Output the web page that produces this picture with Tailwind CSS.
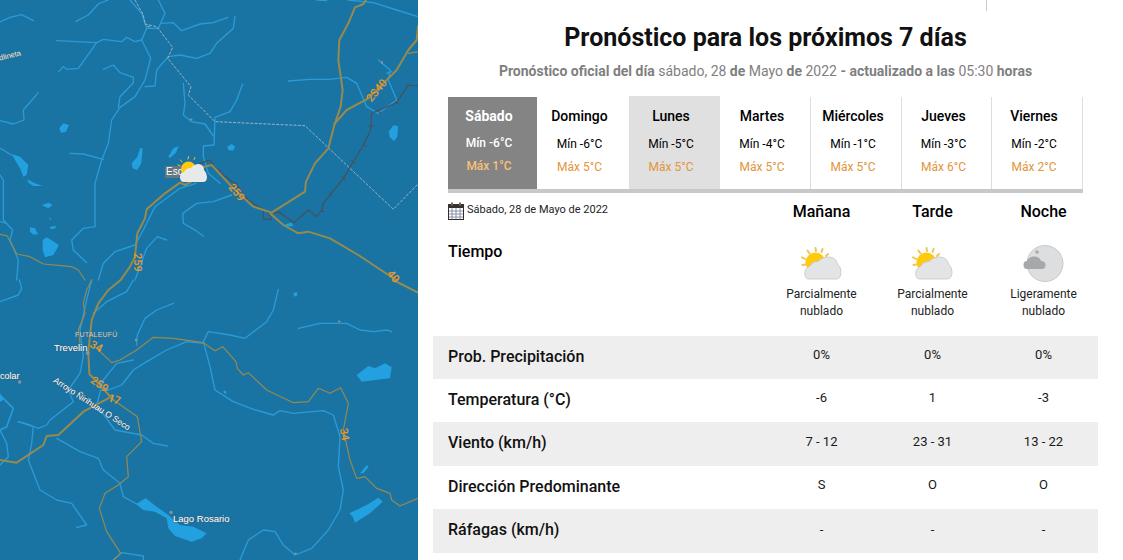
<!DOCTYPE html>
<html lang="es">
<head>
<meta charset="UTF-8">
<title>Pronóstico</title>
<script src="https://cdn.jsdelivr.net/npm/@tailwindcss/browser@4"></script>
</head>
<body class="bg-white font-['Roboto',sans-serif] text-black overflow-hidden">
<div class="flex w-[1123px] h-[560px] overflow-hidden">

  <!-- Map -->
  <div class="relative w-[418px] h-[560px] shrink-0 bg-[#1a74a3] overflow-hidden">
    <svg class="absolute inset-0" width="418" height="560" viewBox="0 0 1254 1680" fill="none" stroke-linejoin="round" stroke-linecap="round">
      <!-- rivers top -->
      <g stroke="#2a9bd9" stroke-width="4">
        <path d="M0 66 L30 52 L65 44 L100 62"/>
        <path d="M228 64 L265 45 L295 12 L325 0"/>
        <path d="M390 0 L425 40 L440 85 L475 85 L495 40 L475 0"/>
        <path d="M170 122 L290 128 L310 118 L365 125 L380 112 L405 125 L425 120 L440 85"/>
        <path d="M290 128 L235 205 L200 208 L190 200 L176 215"/>
        <path d="M425 120 L440 150 L452 175 L435 240 L405 290 L360 322 L335 360 L325 430 L305 480 L285 550 L285 680 L250 685 L215 720 L220 750 L260 788"/>
        <path d="M310 208 L340 195 L360 218 L400 232 L400 248 L360 290 L355 322"/>
        <path d="M485 70 L520 68 L545 92 L600 72 L640 68 L684 52"/>
        <path d="M705 50 L700 85 L650 130 L630 160 L590 175 L540 165 L505 170 L470 210 L465 258 L435 260"/>
        <path d="M550 250 L555 310 L550 345 L575 365 L615 372 L640 408"/>
        <path d="M728 252 L710 300 L690 335 L645 352 L642 435 L610 438 L610 470 L625 520 L660 550"/>
        <path d="M210 460 L250 462 L310 478"/>
        <path d="M115 278 L70 330 L72 360 L40 372 L0 362"/>
        <path d="M0 445 L35 465"/>
        <path d="M0 525 L10 540 L10 660 L38 690 L30 720 L55 780 L50 840"/>
        <path d="M0 665 L20 670"/>
        <path d="M695 585 L640 605 L590 610 L548 640 L550 670 L585 690 L610 708"/>
        <path d="M588 550 L540 565 L465 620 L430 690 L405 735 L345 755 L310 790 L295 840"/>
        <path d="M500 720 L472 710 L440 745 L405 840"/>
        <path d="M865 243 L930 238 L985 238 L1040 232 L1070 250 L1100 320 L1135 340 L1190 300 L1165 240 L1170 210 L1135 180"/>
        <path d="M950 0 L980 2 M1045 0 L1120 8 L1190 30 L1254 50"/>
        <path d="M1160 220 L1175 215"/>
      </g>
      <!-- rivers bottom -->
      <g transform="translate(0 840)" stroke="#2a9bd9" stroke-width="4">
        <path d="M0 65 L55 45 L65 25 L58 0"/>
        <path d="M275 0 L260 60 L240 150 L250 230 L240 280 L205 330 L220 365 L195 385 L150 420 L140 435 L115 445 L90 435 L55 425"/>
        <path d="M400 0 L380 35 L320 65 L280 100"/>
        <path d="M520 70 L470 90 L435 115 L412 165 L410 195"/>
        <path d="M835 28 L820 90 L800 125 L735 175 L690 165 L625 155 L610 185 L630 260 L645 330 L700 365 L760 388 L820 405 L840 392 L880 400 L970 392 L1000 405 L1020 470 L1015 560 L1030 630 L1020 690 L985 750 L935 805 L885 825 L850 795 L825 755 L790 750 L745 780 L720 840"/>
        <path d="M610 190 L560 185 L500 210 L440 245 L400 270 L365 315 L320 332"/>
        <path d="M400 240 L350 250 L310 300 L290 375 L345 450 L425 465 L460 490 L502 498"/>
        <path d="M895 145 L960 130 L1040 130 L1080 150 L1120 155 L1160 150 L1175 155"/>
        <path d="M55 425 L100 440 L95 490 L85 540 L120 630 L170 660 L215 670 L260 735 L230 742"/>
        <path d="M170 475 L240 515 L295 535 L310 570 L360 610 L370 650 L410 672"/>
        <path d="M0 450 L20 490 L25 530 L0 555"/>
        <path d="M0 345 L40 385 L20 440 L0 450" stroke-width="5"/>
        <path d="M340 840 L365 818 L430 828 L430 840"/>
      </g>
      <!-- lakes -->
      <g fill="#22a0e0" stroke="none">
        <path d="M178 385 L190 370 L207 375 L198 395 L183 398Z"/>
        <path d="M395 490 L412 470 L420 445 L428 445 L424 490 L412 510 L398 505Z"/>
        <path d="M505 470 L520 445 L536 438 L528 458 L510 474Z"/>
        <path d="M682 440 L695 432 L706 440 L698 452 L685 450Z"/>
        <path d="M1166 395 L1180 376 L1194 378 L1192 410 L1182 424 L1170 412Z"/>
        <path d="M35 462 L60 470 L85 495 L80 525 L70 530 L60 505 L45 480Z"/>
        <path d="M82 538 L105 550 L128 558 L100 558 L85 548Z"/>
        <path d="M125 616 L145 608 L158 615 L145 625Z"/>
        <path d="M90 682 L105 685 L114 703 L100 704 L90 695Z"/>
        <path d="M150 680 L168 678 L165 686 L150 686Z M147 652 L155 658 L150 660Z"/>
        <path d="M128 720 L140 712 L177 735 L160 765 L135 772 L128 750Z"/>
        <path d="M855 673 L875 668 L880 678 L860 680Z"/>
      </g>
      <g transform="translate(0 840)" fill="#22a0e0" stroke="none">
        <path d="M1070 285 L1105 258 L1125 265 L1155 250 L1175 262 L1170 295 L1125 300 L1085 305Z"/>
        <path d="M408 672 L437 655 L470 680 L505 705 L540 735 L580 740 L620 760 L605 775 L575 785 L525 768 L505 745 L500 715 L465 695 L430 690Z"/>
        <path d="M1048 700 L1100 675 L1135 653 L1148 665 L1110 700 L1065 728 L1058 710Z"/>
        <path d="M880 40 L890 35 L893 46 L882 50Z"/>
        <path d="M670 332 L678 332 L680 342 L672 340Z"/>
        <path d="M1080 580 L1100 556 L1106 560 L1090 580Z"/>
        <path d="M0 340 L10 360 L0 365Z"/>
      </g>
      <!-- borders -->
      <g stroke="#aebfc8" stroke-width="2.500" stroke-dasharray="9 4" stroke-linecap="butt">
        <path d="M405 0 L430 45 L435 72 L470 80 L518 142 L503 175 L573 260 L565 285 L645 365 L915 377 L1180 628 L1254 552"/>
      </g>
      <!-- rail -->
      <g stroke="#4a5058" stroke-width="3.500">
        <path d="M600 490 L630 480 L650 510 L710 555 L745 600 L790 630 L790 658 L815 658 L805 638 L840 638 L882 668 L925 630 L950 650 L965 632 L970 610 L1030 535 L1090 435 L1112 390 L1115 340 L1190 308 L1225 255 L1254 258"/>
        <path stroke-width="3" d="M655 508 L665 514 M705 545 L712 552 M738 595 L748 602 M835 632 L843 640 M960 634 L972 634 M988 580 L998 588 M1024 530 L1036 540 M1055 482 L1067 490 M1088 432 L1100 440 M1106 378 L1122 378 M1132 332 L1142 340 M1185 305 L1196 312 M1218 254 L1230 258"/>
      </g>
      <!-- roads top -->
      <g stroke="#978a4e" stroke-width="6">
        <path d="M1098 0 L1090 12 L1065 22 L1045 70 L1018 120 L1015 180 L1028 270 L1022 320 L1003 375 L985 445 L945 490 L918 545 L915 575 L815 638 L760 620 L700 565 L635 495 L612 500 L575 545 L555 555 L540 548 L495 580 L440 628 L435 655 L412 700 L405 770 L390 800 L362 840"/>
        <path d="M1003 372 L1040 330 L1105 295 L1190 210 L1225 150 L1250 120 L1254 80"/>
        <path d="M810 640 L850 675 L895 700 L925 695 L990 715 L1075 765 L1165 825 L1190 840"/>
      </g>
      <g stroke="#978a4e" stroke-width="3.500">
        <path d="M1225 160 L1254 155"/>
        <path d="M0 703 L22 708 L50 762 L90 770 L130 792 L215 800 L235 810 L255 840"/>
      </g>
      <!-- roads bottom -->
      <g transform="translate(0 840)" stroke="#978a4e">
        <path stroke-width="6" d="M362 0 L325 30 L295 70 L275 120 L265 215 L268 282 L295 310 L340 360"/>
        <path stroke-width="6" d="M0 540 L50 548 L130 495 L140 468 L175 465 L250 395 L330 352"/>
        <path stroke-width="3.500" d="M275 0 L260 30 L250 70 L255 100 L235 150 L240 190"/>
        <path stroke-width="3.500" d="M290 205 L335 248 L360 240 L410 210 L460 172 L520 175 L610 188 L645 212 L668 200 L708 245 L712 265 L730 285 L745 278 L800 330 L880 368 L925 365 L955 325 L990 340 L1022 323 L1045 370 L1030 450 L1050 540 L1070 595 L1095 590 L1130 625 L1170 640 L1175 660 L1200 678 L1254 655"/>
        <path stroke-width="3.500" d="M340 360 L412 410 L425 485 L380 530 L385 590 L355 615 L315 640 L298 685 L320 755 L362 820 L340 840"/>
        <path stroke-width="6" d="M1180 0 L1254 38"/>
      </g>
      <!-- small places -->
      <g fill="#8e9298" stroke="none">
        <rect x="442" y="77" width="9" height="5"/>
        <rect x="1143" y="184" width="6" height="7"/>
        <rect x="570" y="356" width="7" height="5"/>
        <rect x="405" y="1016" width="6" height="7"/>
        <rect x="1014" y="962" width="7" height="5"/>
        <rect x="883" y="1658" width="7" height="6"/>
        <circle cx="263" cy="1059" r="6"/>
        <circle cx="59" cy="1146" r="5"/>
        <circle cx="513" cy="1537" r="5"/>
      </g>
    </svg>

    <!-- Map labels -->
    <span class="absolute left-[-1px] top-[52px] -rotate-[14deg] text-[7.500px] leading-none text-[#eee] [text-shadow:0_0_2px_#555] font-['Liberation_Sans',sans-serif]">dlineta</span>
    <span class="absolute left-[165px] top-[166px] text-[10px] leading-[12px] text-white bg-[#777]/80 px-[1px] font-['Liberation_Sans',sans-serif]">Esq</span>
    <span class="absolute left-[75px] top-[331px] text-[7px] leading-[8px] text-[#ccc] [text-shadow:0_0_2px_#666] tracking-[0.2px] font-['Liberation_Sans',sans-serif]">FUTALEUFÚ</span>
    <span class="absolute left-[54px] top-[342px] text-[9.500px] leading-[12px] text-white [text-shadow:0_0_2px_#555] font-['Liberation_Sans',sans-serif]">Trevelin</span>
    <span class="absolute left-[0px] top-[371px] text-[9px] leading-[11px] text-white [text-shadow:0_0_2px_#555] font-['Liberation_Sans',sans-serif]">colar</span>
    <span class="absolute left-[57px] top-[375px] origin-top-left rotate-[33deg] text-[8.500px] leading-[10px] whitespace-nowrap text-white [text-shadow:0_0_2px_#444] font-['Liberation_Sans',sans-serif]">Arroyo Ñirihuau O Seco</span>
    <span class="absolute left-[173px] top-[513px] text-[9.500px] leading-[12px] text-white [text-shadow:0_0_2px_#555] font-['Liberation_Sans',sans-serif]">Lago Rosario</span>

    <!-- Road numbers -->
    <span class="absolute left-[364px] top-[85px] -rotate-[50deg] text-[11px] leading-none font-medium text-[#e89a2c]">2S40</span>
    <span class="absolute left-[227px] top-[187px] rotate-[50deg] text-[11px] leading-none font-medium text-[#e89a2c]">259</span>
    <span class="absolute left-[128px] top-[257px] rotate-90 text-[11px] leading-none font-medium text-[#e89a2c]">259</span>
    <span class="absolute left-[387px] top-[271px] rotate-[50deg] text-[11px] leading-none font-medium text-[#e89a2c]">40</span>
    <span class="absolute left-[90px] top-[341px] rotate-[30deg] text-[11px] leading-none font-medium text-[#e89a2c]">34</span>
    <span class="absolute left-[90px] top-[379px] rotate-[35deg] text-[11px] leading-none font-medium text-[#e89a2c]">259</span>
    <span class="absolute left-[108px] top-[394px] rotate-[20deg] text-[11px] leading-none font-medium text-[#e89a2c]">17</span>
    <span class="absolute left-[338px] top-[429px] rotate-[80deg] text-[11px] leading-none font-medium text-[#e89a2c]">34</span>

    <!-- Map weather marker -->
    <svg class="absolute left-[176px] top-[156px]" width="34" height="28" viewBox="0 0 34 28">
      <g stroke="#e9c33e" stroke-width="1" stroke-linecap="round">
        <path d="M12 3 L12.500 0.500 M6 6 L4.500 4 M18 3.500 L19 1.500 M2 9 L4 9.500"/>
      </g>
      <circle cx="12.500" cy="13" r="7.500" fill="#ffc90e"/>
      <path d="M8 26 Q4 26 4 21 Q4 17 8 16 Q10 12 15 12 Q18 8 23 8 Q28 9 28 14 Q31 17 31 21 Q31 26 27 26Z" fill="#e8e9eb"/>
    </svg>
  </div>

  <!-- Forecast panel -->
  <div class="relative w-[705px] shrink-0 pt-[23px]">
    <div class="absolute left-[568px] top-0 w-px h-[11px] bg-[#ccc]"></div>
    <h1 class="ml-[15px] w-[665px] text-center text-[25px] leading-[30px] font-bold text-[#111]">Pronóstico para los próximos 7 días</h1>
    <p class="ml-[15px] w-[665px] mt-[10px] text-center text-[14px] leading-[17px] font-bold text-[#7f7f7f]">Pronóstico oficial del día <span class="font-normal">sábado, 28</span> de <span class="font-normal">Mayo</span> de <span class="font-normal">2022</span> - actualizado a las <span class="font-normal">05:30</span> horas</p>

    <!-- Day tabs -->
    <div class="ml-[30px] mt-[17px] w-[635px] h-[96px] grid grid-cols-[89px_92px_91px_91px_91px_90px_91px] border-b-4 border-[#c8c8c8] text-center text-[12px]">
      <div class="bg-[#848484] text-white font-medium h-[92px] pr-[7px]">
        <div class="text-[14px] leading-[17px] font-bold pt-[11px]">Sábado</div>
        <div class="mt-[11px] leading-[14px]">Mín -6°C</div>
        <div class="mt-[9px] leading-[14px] text-[#f6c27a]">Máx 1°C</div>
      </div>
      <div class="h-[92px] pr-[7px]">
        <div class="text-[14px] leading-[17px] font-medium pt-[11px]">Domingo</div>
        <div class="mt-[12px] leading-[14px]">Mín -6°C</div>
        <div class="mt-[9px] leading-[14px] text-[#e2953a]">Máx 5°C</div>
      </div>
      <div class="bg-[#e0e0e0] h-[93px] -mt-px pr-[7px]">
        <div class="text-[14px] leading-[17px] font-medium pt-[12px]">Lunes</div>
        <div class="mt-[12px] leading-[14px]">Mín -5°C</div>
        <div class="mt-[9px] leading-[14px] text-[#e2953a]">Máx 5°C</div>
      </div>
      <div class="border-r border-[#ddd] h-[92px] pr-[6px]">
        <div class="text-[14px] leading-[17px] font-medium pt-[11px]">Martes</div>
        <div class="mt-[12px] leading-[14px]">Mín -4°C</div>
        <div class="mt-[9px] leading-[14px] text-[#e2953a]">Máx 5°C</div>
      </div>
      <div class="border-r border-[#ddd] h-[92px] pr-[6px]">
        <div class="text-[14px] leading-[17px] font-medium pt-[11px]">Miércoles</div>
        <div class="mt-[12px] leading-[14px]">Mín -1°C</div>
        <div class="mt-[9px] leading-[14px] text-[#e2953a]">Máx 5°C</div>
      </div>
      <div class="border-r border-[#ddd] h-[92px] pr-[6px]">
        <div class="text-[14px] leading-[17px] font-medium pt-[11px]">Jueves</div>
        <div class="mt-[12px] leading-[14px]">Mín -3°C</div>
        <div class="mt-[9px] leading-[14px] text-[#e2953a]">Máx 6°C</div>
      </div>
      <div class="border-r border-[#ddd] h-[92px] pr-[6px]">
        <div class="text-[14px] leading-[17px] font-medium pt-[11px]">Viernes</div>
        <div class="mt-[12px] leading-[14px]">Mín -2°C</div>
        <div class="mt-[9px] leading-[14px] text-[#e2953a]">Máx 2°C</div>
      </div>
    </div>

    <!-- Period header and sky -->
    <div class="ml-[30px] w-[651px] grid grid-cols-[318px_111px_111px_111px] h-[143px]">
      <div>
        <div class="flex items-center gap-[3px] h-[21px] mt-[7px] text-[11px] text-[#222]">
          <svg width="16" height="18" viewBox="0 0 16 18" fill="none">
            <rect x="0.500" y="3.500" width="15" height="14" fill="#fff" stroke="#3a2a2a"/>
            <rect x="0.500" y="2.500" width="15" height="3" fill="#333" stroke="#333"/>
            <path d="M4 0.500v3M12 0.500v3" stroke="#8a6a3a" stroke-width="2"/>
            <path d="M4 6v11M8 6v11M12 6v11M1 9h14M1 12h14M1 15h14" stroke="#6f7f9a" stroke-width="0.800"/>
          </svg>
          <span>Sábado, 28 de Mayo de 2022</span>
        </div>
        <div class="mt-[21px] text-[16px] leading-[19px] font-medium">Tiempo</div>
      </div>
      <div class="text-center">
        <div class="mt-[9px] text-[16px] leading-[20px] font-medium">Mañana</div>
        <svg class="mx-auto mt-[25px] block" width="42" height="36" viewBox="0 0 42 36">
          <g stroke="#edc65a" stroke-width="2" stroke-linecap="round">
            <path d="M1 10.300 L4 12 M6.500 3.500 L8.500 6.500 M14.500 1 L15 4 M21.500 2 L20.500 5 M27 7 L25 9 M1.500 18 L4.500 17.500"/>
          </g>
          <circle cx="14.500" cy="15.500" r="10" fill="#ffc90e"/>
          <path d="M8 32 Q3.500 32 3.800 26 Q4 21 9 19 Q11 14.500 17 14.500 Q21 10 28 10 Q35 10.500 36.500 17 Q40 20 40 25 Q40 32 35 32Z" fill="#e3e4e6" stroke="#c6c6c6" stroke-width="0.800"/>
        </svg>
        <div class="mt-[3px] text-[12px] leading-[17px] text-[#222]">Parcialmente<br>nublado</div>
      </div>
      <div class="text-center">
        <div class="mt-[9px] text-[16px] leading-[20px] font-medium">Tarde</div>
        <svg class="mx-auto mt-[25px] block" width="42" height="36" viewBox="0 0 42 36">
          <g stroke="#edc65a" stroke-width="2" stroke-linecap="round">
            <path d="M1 10.300 L4 12 M6.500 3.500 L8.500 6.500 M14.500 1 L15 4 M21.500 2 L20.500 5 M27 7 L25 9 M1.500 18 L4.500 17.500"/>
          </g>
          <circle cx="14.500" cy="15.500" r="10" fill="#ffc90e"/>
          <path d="M8 32 Q3.500 32 3.800 26 Q4 21 9 19 Q11 14.500 17 14.500 Q21 10 28 10 Q35 10.500 36.500 17 Q40 20 40 25 Q40 32 35 32Z" fill="#e3e4e6" stroke="#c6c6c6" stroke-width="0.800"/>
        </svg>
        <div class="mt-[3px] text-[12px] leading-[17px] text-[#222]">Parcialmente<br>nublado</div>
      </div>
      <div class="text-center">
        <div class="mt-[9px] text-[16px] leading-[20px] font-medium">Noche</div>
        <svg class="mx-auto mt-[23px] block" width="42" height="38" viewBox="0 0 42 38">
          <circle cx="22" cy="18.500" r="18" fill="#dddee0" stroke="#c9c9c9" stroke-width="1"/>
          <circle cx="14" cy="7" r="1.800" fill="#a9abad"/>
          <path d="M4 24 Q0.500 24 0.500 20 Q0.500 16 4 16 Q6 11 12 11.500 Q17 12 18 16 Q22.500 16 22.500 20 Q22.500 24 19 24Z" fill="#a6a8aa"/>
        </svg>
        <div class="mt-[3px] text-[12px] leading-[17px] text-[#222]">Ligeramente<br>nublado</div>
      </div>
    </div>

    <!-- Data rows -->
    <div class="ml-[15px] w-[665px] text-[13px] text-[#1a1a1a]">
      <div class="grid grid-cols-[318px_111px_111px_111px] items-center h-[43px] bg-[#eeeeee] pl-[15px]">
        <div class="text-[16px] font-medium text-[#111] pb-[2px]">Prob. Precipitación</div><div class="text-center pb-[5px]">0%</div><div class="text-center pb-[5px]">0%</div><div class="text-center pb-[5px]">0%</div>
      </div>
      <div class="grid grid-cols-[318px_111px_111px_111px] items-center h-[43px] pl-[15px]">
        <div class="text-[16px] font-medium text-[#111] pb-[2px]">Temperatura (°C)</div><div class="text-center pb-[5px]">-6</div><div class="text-center pb-[5px]">1</div><div class="text-center pb-[5px]">-3</div>
      </div>
      <div class="grid grid-cols-[318px_111px_111px_111px] items-center h-[44px] bg-[#eeeeee] pl-[15px]">
        <div class="text-[16px] font-medium text-[#111] pb-[2px]">Viento (km/h)</div><div class="text-center pb-[5px]">7 - 12</div><div class="text-center pb-[5px]">23 - 31</div><div class="text-center pb-[5px]">13 - 22</div>
      </div>
      <div class="grid grid-cols-[318px_111px_111px_111px] items-center h-[43px] pl-[15px]">
        <div class="text-[16px] font-medium text-[#111] pb-[2px]">Dirección Predominante</div><div class="text-center pb-[5px]">S</div><div class="text-center pb-[5px]">O</div><div class="text-center pb-[5px]">O</div>
      </div>
      <div class="grid grid-cols-[318px_111px_111px_111px] items-center h-[44px] bg-[#eeeeee] pl-[15px]">
        <div class="text-[16px] font-medium text-[#111] pb-[2px]">Ráfagas (km/h)</div><div class="text-center pb-[3px]">-</div><div class="text-center pb-[3px]">-</div><div class="text-center pb-[3px]">-</div>
      </div>
    </div>
  </div>
</div>
</body>
</html>
